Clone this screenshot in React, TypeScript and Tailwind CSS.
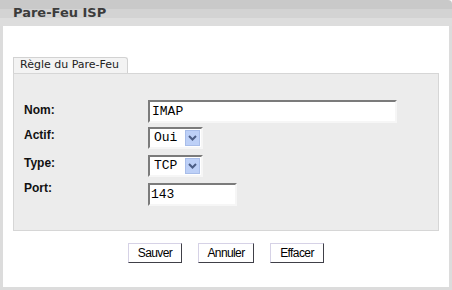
import React from "react";

const Arrow = () => (
  <div className="w-[15px] h-[16px] bg-[#bdd0f7] border border-[#a8bde9] flex items-center justify-center">
    <svg width="9" height="6" viewBox="0 0 9 6">
      <polyline points="1,1 4.5,4.5 8,1" fill="none" stroke="#4b5d85" strokeWidth="2" />
    </svg>
  </div>
);

const inputCls =
  "bg-white border-t-2 border-l-2 border-b-2 border-r-2 border-t-[#7b7b7b] border-l-[#7b7b7b] border-b-[#f6f6f6] border-r-[#f6f6f6] text-[13px] text-black flex items-center";

const Select = ({ value }: { value: string }) => (
  <div className={`${inputCls} w-[55px] h-[22px] pl-[4px] pr-[1px] justify-between`} style={{ fontFamily: '"Liberation Mono", monospace' }}>
    <span>{value}</span>
    <Arrow />
  </div>
);

const Btn = ({ label, w }: { label: string; w: string }) => (
  <button
    className={`${w} h-[20px] bg-white border border-t-[#d6d2e6] border-l-[#d6d2e6] border-b-[#404048] border-r-[#404048] text-[12px] text-black tracking-[-0.6px] flex items-center justify-center`}
    style={{ fontFamily: '"Liberation Sans", Arial, sans-serif' }}
  >
    {label}
  </button>
);

export default function App() {
  const labelCls = "w-[134px] pl-[10px] text-[12px] font-bold text-[#111]";
  return (
    <div className="w-[452px] h-[290px] bg-white flex flex-col" style={{ fontFamily: '"Liberation Sans", Arial, sans-serif' }}>
      <div
        className="h-[26px] shrink-0 rounded-tr-[4px] flex items-center pl-[13px] bg-[linear-gradient(to_bottom,#c9c9c9_0px,#c9c9c9_9px,#d3d3d3_9px,#d3d3d3_18px,#dddddd_18px,#dddddd_26px)]"
      >
        <span className="text-[13px] font-bold text-[#3c3c3c]" style={{ fontFamily: '"DejaVu Sans", Verdana, sans-serif' }}>
          Pare-Feu ISP
        </span>
      </div>
      <div className="flex-1 border-l-[3px] border-r-[3px] border-b-[3px] border-[#dcdcdc] px-[10px] pt-[31px] flex flex-col">
        <div className="flex">
          <div
            className="h-[16px] w-[115px] bg-[#f3f3f3] border-t border-l border-r border-[#d2d2d2] rounded-tr-[3px] pl-[6px] flex items-center text-[11px] text-[#222] whitespace-nowrap"
            style={{ fontFamily: '"DejaVu Sans", Verdana, sans-serif' }}
          >
            Règle du Pare-Feu
          </div>
        </div>
        <div className="h-[158px] bg-[#ececec] border border-[#d6d6d6] pt-[26px] flex flex-col gap-[4px]">
          <div className="flex items-start h-[23px]">
            <div className={`${labelCls} pt-[1px]`}>Nom:</div>
            <div className={`${inputCls} w-[249px] h-[23px] pl-[2px]`} style={{ fontFamily: '"Liberation Mono", monospace' }}>
              IMAP
            </div>
          </div>
          <div className="flex items-start h-[23px]">
            <div className={`${labelCls} -mt-[1px]`}>Actif:</div>
            <Select value="Oui" />
          </div>
          <div className="flex items-start h-[23px] mt-[1px]">
            <div className={`${labelCls} -mt-[1px]`}>Type:</div>
            <Select value="TCP" />
          </div>
          <div className="flex items-start h-[23px] mt-[1px]">
            <div className={`${labelCls} -mt-[4px]`}>Port:</div>
            <div className={`${inputCls} w-[89px] h-[23px] pl-[1px]`} style={{ fontFamily: '"Liberation Mono", monospace' }}>
              143
            </div>
          </div>
        </div>
        <div className="flex justify-center gap-[16px] mt-[12px]">
          <Btn label="Sauver" w="w-[54px]" />
          <Btn label="Annuler" w="w-[56px]" />
          <Btn label="Effacer" w="w-[54px]" />
        </div>
      </div>
    </div>
  );
}
